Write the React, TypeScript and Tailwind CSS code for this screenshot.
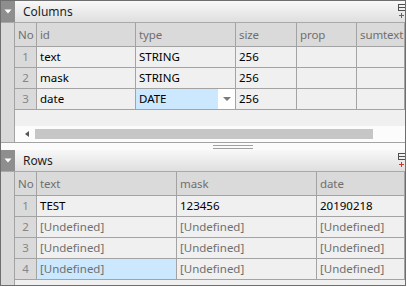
import React from "react";

const LINE = "border-[#a3a3a3]";

function HeaderBar({ title }: { title: string }) {
  return (
    <div className="relative flex h-[22px] border-b border-[#a9a9a9]">
      <div className="flex w-[14px] items-center justify-center bg-[#8e8e8e]">
        <svg width="8" height="5" viewBox="0 0 8 5">
          <polygon points="0.5,0.5 7.5,0.5 4,4.5" fill="#ffffff" />
        </svg>
      </div>
      <div className="flex flex-1 items-center bg-gradient-to-b from-[#f8f8f8] to-[#dfdfdf] pl-[8px] text-[12px] text-[#1e1e1e]">
        {title}
      </div>
      <svg className="absolute right-0 top-[3px]" width="9" height="16" viewBox="0 0 9 16">
        <rect x="2.5" y="0.5" width="7" height="6" fill="none" stroke="#4f4f4f" />
        <line x1="2.5" y1="3.5" x2="9" y2="3.5" stroke="#4f4f4f" />
        <line x1="3" y1="11.5" x2="8" y2="11.5" stroke="#e0302a" />
        <line x1="5.5" y1="9" x2="5.5" y2="14" stroke="#e0302a" />
      </svg>
    </div>
  );
}

function Gutter() {
  return <div className={`w-[14px] shrink-0 border-r ${LINE} bg-[#d9d9d9]`} />;
}

function HeadCell({ children }: { children?: React.ReactNode }) {
  return (
    <div className={`flex h-[24px] items-center whitespace-nowrap border-b border-r ${LINE} bg-[#dadada] pl-[3px] tracking-[-0.1px] text-[#6f6f6f]`}>
      {children}
    </div>
  );
}

function NoCell({ n }: { n: number }) {
  return (
    <div className={`flex h-[21px] items-center justify-center border-b border-r ${LINE} bg-[#dadada] text-[#868686]`}>
      {n}
    </div>
  );
}

function Cell({ children, muted, selected }: { children?: React.ReactNode; muted?: boolean; selected?: boolean }) {
  return (
    <div
      className={`flex h-[21px] items-center overflow-hidden whitespace-nowrap border-b border-r ${LINE} pl-[3px] ${
        selected ? "bg-[#cce8ff]" : "bg-[#f0f0f0]"
      } ${muted ? "text-[#6f6f6f]" : "text-black"}`}
    >
      {children}
    </div>
  );
}

function ColumnsPanel() {
  const rows = [
    ["text", "STRING", "256"],
    ["mask", "STRING", "256"],
  ];
  return (
    <div className="flex flex-col">
      <HeaderBar title="Columns" />
      <div className={`flex h-[120px] border-b ${LINE}`}>
        <Gutter />
        <div className="flex flex-1 flex-col bg-[#f0f0f0]">
          <div className="grid grid-cols-[22px_99px_100px_61px_60px_1fr]">
            <HeadCell>No</HeadCell>
            <HeadCell>id</HeadCell>
            <HeadCell>type</HeadCell>
            <HeadCell>size</HeadCell>
            <HeadCell>prop</HeadCell>
            <HeadCell>sumtext</HeadCell>
            {rows.map((r, i) => (
              <React.Fragment key={i}>
                <NoCell n={i + 1} />
                <Cell>{r[0]}</Cell>
                <Cell>{r[1]}</Cell>
                <Cell>{r[2]}</Cell>
                <Cell />
                <Cell />
              </React.Fragment>
            ))}
            <NoCell n={3} />
            <Cell>date</Cell>
            <div className={`flex h-[21px] border-b border-r ${LINE} bg-white`}>
              <div className="flex flex-1 items-center bg-[#cce8ff] pl-[3px] text-black">DATE</div>
              <div className="flex w-[17px] items-center justify-center">
                <svg width="8" height="4" viewBox="0 0 8 4">
                  <polygon points="0,0 8,0 4,4" fill="#7a7a7a" />
                </svg>
              </div>
            </div>
            <Cell>256</Cell>
            <Cell />
            <Cell />
          </div>
          <div className="flex-1" />
          <div className="flex h-[16px] items-center bg-[#fcfcfc] pb-[1px]">
            <div className="flex w-[20px] items-center justify-center pl-[3px]">
              <svg width="4" height="6" viewBox="0 0 4 6">
                <polygon points="4,0 4,6 0,3" fill="#555555" />
              </svg>
            </div>
            <div className="h-[10px] w-[338px] bg-[#c6c6c6]" />
          </div>
        </div>
      </div>
    </div>
  );
}

function Splitter() {
  return (
    <div className="flex h-[7px] flex-col items-center bg-[#fbfbfb] pt-[2px]">
      <div className="ml-[60px] h-[1px] w-[40px] bg-[#a0a0a0]" />
      <div className="ml-[60px] mt-[2px] h-[1px] w-[40px] bg-[#a0a0a0]" />
    </div>
  );
}

function RowsPanel() {
  const rows: [string, string, string, boolean][] = [
    ["TEST", "123456", "20190218", false],
    ["[Undefined]", "[Undefined]", "[Undefined]", true],
    ["[Undefined]", "[Undefined]", "[Undefined]", true],
  ];
  return (
    <div className="flex flex-1 flex-col">
      <HeaderBar title="Rows" />
      <div className="flex flex-1">
        <Gutter />
        <div className="flex flex-1 flex-col bg-[#f0f0f0]">
          <div className="grid grid-cols-[22px_140px_140px_1fr]">
            <HeadCell>No</HeadCell>
            <HeadCell>text</HeadCell>
            <HeadCell>mask</HeadCell>
            <HeadCell>date</HeadCell>
            {rows.map((r, i) => (
              <React.Fragment key={i}>
                <NoCell n={i + 1} />
                <Cell muted={r[3]}>{r[0]}</Cell>
                <Cell muted={r[3]}>{r[1]}</Cell>
                <Cell muted={r[3]}>{r[2]}</Cell>
              </React.Fragment>
            ))}
            <NoCell n={4} />
            <Cell muted selected>[Undefined]</Cell>
            <Cell muted>[Undefined]</Cell>
            <Cell muted>[Undefined]</Cell>
          </div>
        </div>
      </div>
    </div>
  );
}

export default function App() {
  return (
    <div className="h-[287px] w-[407px] overflow-hidden bg-white font-['Noto_Sans',sans-serif] text-[11.5px] leading-none">
      <div className="flex h-[286px] w-[406px] flex-col overflow-hidden border border-[#6e6e6e]">
        <ColumnsPanel />
        <Splitter />
        <RowsPanel />
      </div>
    </div>
  );
}
